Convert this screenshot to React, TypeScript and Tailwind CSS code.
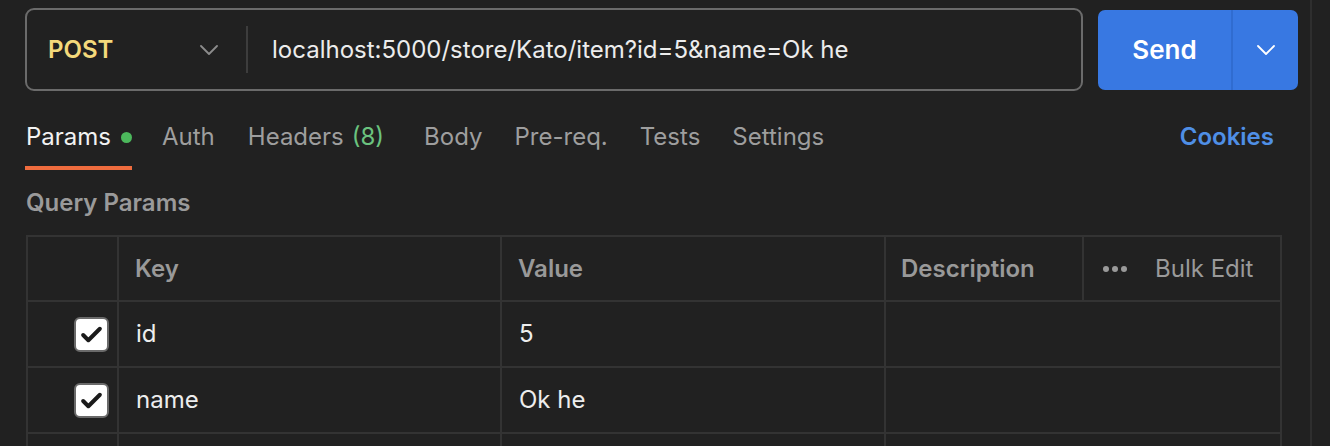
import React from "react";

const font = { fontFamily: "Inter, 'Noto Sans', sans-serif" };

function Chevron({ className }: { className?: string }) {
  return (
    <svg width="18" height="10" viewBox="0 0 18 10" fill="none" className={className}>
      <path d="M1 1l8 8 8-8" stroke="currentColor" strokeWidth="1.8" strokeLinecap="round" strokeLinejoin="round" />
    </svg>
  );
}

function Checkbox() {
  return (
    <div className="w-[35px] h-[35px] rounded-[6px] bg-white border-2 border-[#6a6a6a] flex items-center justify-center">
      <svg width="23" height="19" viewBox="0 0 22 18" fill="none">
        <path d="M3 9.5l5 5L19 3.5" stroke="#1b1b1b" strokeWidth="3.8" strokeLinecap="round" strokeLinejoin="round" />
      </svg>
    </div>
  );
}

const tabs = [
  { label: "Auth", ml: "ml-[30px]" },
  { label: "Headers", ml: "ml-[33px]", count: "(8)" },
  { label: "Body", ml: "ml-[40px]" },
  { label: "Pre-req.", ml: "ml-[32px]" },
  { label: "Tests", ml: "ml-[32px]" },
  { label: "Settings", ml: "ml-[32px]" },
];

const rows = [
  { key: "id", value: "5" },
  { key: "name", value: "Ok he" },
  { key: "", value: "" },
];

export default function App() {
  return (
    <div className="w-[1330px] h-[446px] bg-[#212121] overflow-hidden flex" style={font}>
      {/* Request panel */}
      <div className="w-[1312px] h-full border-r-2 border-[#2e2e2e] pl-[25px] shrink-0">
        {/* URL bar */}
        <div className="pt-[8px] flex items-center">
          <div className="w-[1058px] h-[83px] rounded-[9px] border-2 border-[#6b6b6b] flex items-center">
            <div className="w-[219px] pl-[21px] pr-[28px] flex items-center justify-between">
              <span className="text-[24px] font-semibold text-[#f4d97b]">POST</span>
              <Chevron className="text-[#8c8c8c]" />
            </div>
            <div className="w-[2px] h-[47px] bg-[#3d3d3d]" />
            <span className="ml-[24px] text-[24px] text-[#ececec]">
              localhost:5000/store/Kato/item?id=5&name=Ok he
            </span>
          </div>
          <div className="ml-[15px] w-[200px] h-[80px] rounded-[7px] bg-[#3878e2] flex">
            <div className="w-[135px] flex items-center justify-center border-r-2 border-[#306cd0]">
              <span className="text-[26px] font-semibold text-white">Send</span>
            </div>
            <div className="flex-1 flex items-center justify-center">
              <Chevron className="text-white" />
            </div>
          </div>
        </div>

        {/* Tabs */}
        <div className="mt-[30px] flex items-start pr-[36px] text-[24px] leading-[32px]">
          <div className="pl-[1px] pb-[13px] border-b-4 border-[#ef6c3e] flex items-center">
            <span className="text-[#f2f2f2]">Params</span>
            <span className="ml-[10px] w-[11px] h-[11px] rounded-full bg-[#4cb85c]" />
          </div>
          {tabs.map((t) => (
            <div key={t.label} className={`${t.ml} pb-[13px] border-b-4 border-transparent text-[#9e9e9e]`}>
              {t.label}
              {t.count && <span className="ml-[8px] text-[#6bc37f]">{t.count}</span>}
            </div>
          ))}
          <div className="ml-auto font-semibold text-[#4f8fe6]">Cookies</div>
        </div>

        {/* Query Params */}
        <div className="mt-[17px] pl-[1px] text-[24px] leading-[32px] font-semibold text-[#9a9a9a]">
          Query Params
        </div>

        {/* Table */}
        <div className="mt-[16px] ml-[1px] w-fit grid grid-cols-[91px_383px_384px_198px_198px] border-l-2 border-t-2 border-[#333333] text-[24px]">
          <div className="h-[65px] border-r-2 border-b-2 border-[#333333]" />
          <div className="h-[65px] border-r-2 border-b-2 border-[#333333] pl-[16px] flex items-center font-semibold text-[#999999]">Key</div>
          <div className="h-[65px] border-r-2 border-b-2 border-[#333333] pl-[16px] flex items-center font-semibold text-[#999999]">Value</div>
          <div className="h-[65px] border-r-2 border-b-2 border-[#333333] pl-[15px] flex items-center font-semibold text-[#999999]">Description</div>
          <div className="h-[65px] border-r-2 border-b-2 border-[#333333] pl-[18px] flex items-center text-[#9a9a9a]">
            <svg width="26" height="8" viewBox="0 0 26 8" fill="none">
              <circle cx="4" cy="4" r="3" fill="#9a9a9a" />
              <circle cx="13" cy="4" r="3" fill="#9a9a9a" />
              <circle cx="22" cy="4" r="3" fill="#9a9a9a" />
            </svg>
            <span className="ml-[27px]">Bulk Edit</span>
          </div>
          {rows.map((r, i) => (
            <React.Fragment key={i}>
              <div className="h-[66px] border-r-2 border-b-2 border-[#333333] flex items-center justify-end pr-[8px]">
                {r.key && <Checkbox />}
              </div>
              <div className="h-[66px] border-r-2 border-b-2 border-[#333333] pl-[17px] flex items-center text-[#ededed]">{r.key}</div>
              <div className="h-[66px] border-r-2 border-b-2 border-[#333333] pl-[17px] flex items-center text-[#ededed]">{r.value}</div>
              <div className="col-span-2 h-[66px] border-r-2 border-b-2 border-[#333333]" />
            </React.Fragment>
          ))}
        </div>
      </div>
      <div className="flex-1" />
    </div>
  );
}
